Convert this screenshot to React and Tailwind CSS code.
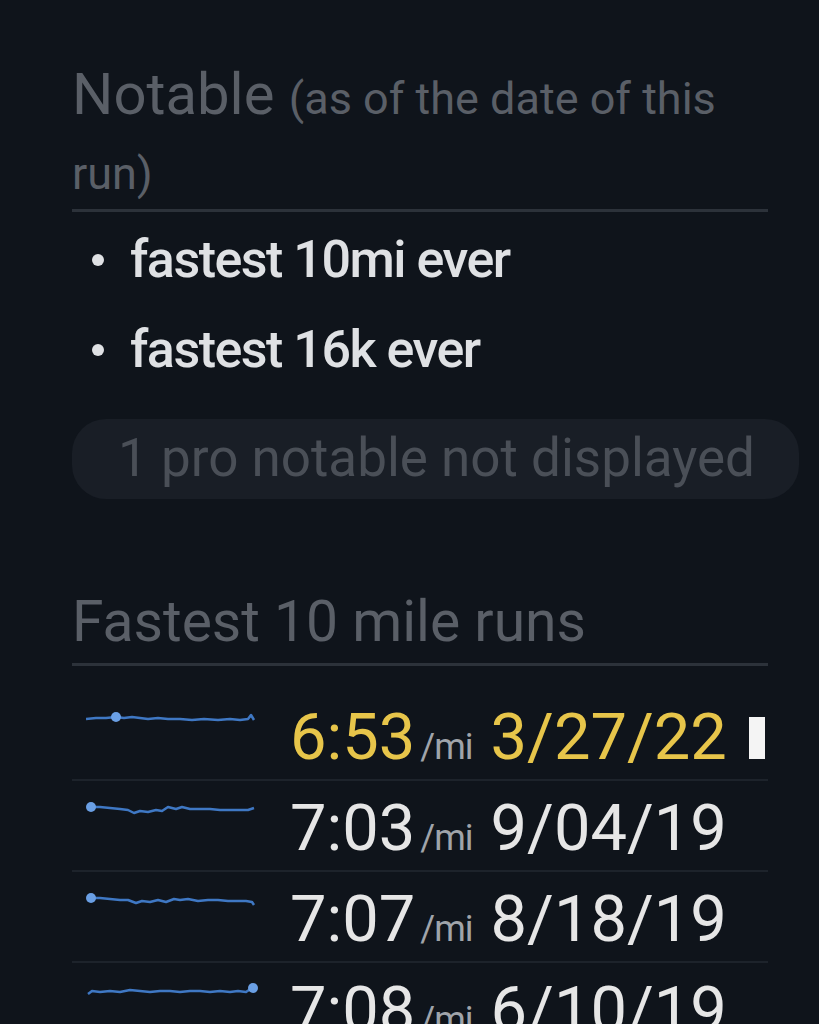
import React from 'react';

const runs = [
  { pace: '6:53', date: '3/27/22', best: true, dot: 'mid', path: 'M0 11 L10 10 L20 10 L30 9 L38 10 L46 9 L54 10 L62 11 L72 10 L82 11 L94 11 L106 12 L118 11 L132 12 L144 11 L154 12 L162 11 L165 7 L168 12' },
  { pace: '7:03', date: '9/04/19', dot: 'start', path: 'M4 8 L14 8 L24 9 L34 10 L42 11 L48 14 L54 12 L62 13 L70 11 L76 12 L82 8 L90 10 L96 8 L104 10 L114 10 L124 10 L134 11 L144 11 L154 11 L162 11 L168 9' },
  { pace: '7:07', date: '8/18/19', dot: 'start', path: 'M4 8 L14 8 L24 9 L34 10 L42 10 L50 13 L56 11 L64 12 L72 10 L80 12 L88 9 L94 10 L102 9 L112 11 L122 10 L132 10 L142 11 L152 11 L160 11 L166 12 L168 15' },
  { pace: '7:08', date: '6/10/19', dot: 'end', path: 'M2 13 L6 10 L14 11 L24 10 L34 11 L44 9 L54 10 L64 11 L74 10 L84 10 L94 11 L104 10 L114 10 L124 11 L134 10 L144 11 L152 10 L160 11 L166 7' },
];

function Spark({ path, dot }) {
  return (
    <svg width="172" height="22" viewBox="0 0 172 22" className="shrink-0">
      <path d={path} fill="none" stroke="#3f78c4" strokeWidth="2.5" strokeLinejoin="round" />
      {dot === 'start' && <circle cx="5" cy="8" r="5" fill="#6a9fe4" />}
      {dot === 'mid' && <circle cx="30" cy="9" r="5" fill="#6a9fe4" />}
      {dot === 'end' && <circle cx="167" cy="7" r="5" fill="#6a9fe4" />}
    </svg>
  );
}

export default function App() {
  return (
    <div className="min-h-screen w-full bg-[#0f141b] overflow-hidden" style={{ fontFamily: 'Roboto, "Noto Sans", sans-serif' }}>
      <div className="pl-[72px] pr-[51px] pt-[59px]">
        {/* notable */}
        <h2 className="text-[58px] leading-[70px] text-[#5a5f67] border-b-[3px] border-[#2c323a]">
          Notable <span className="text-[45px]">(as of the date of this run)</span>
        </h2>
        <ul className="mt-[3px]">
          {['fastest 10mi ever', 'fastest 16k ever'].map((t) => (
            <li key={t} className="flex items-center h-[90px] text-[52px] font-medium tracking-[-1.5px] text-[#dfe1e4]">
              <span className="w-[12px] h-[12px] rounded-full bg-[#dfe1e4] ml-[20px] mr-[26px] shrink-0" />
              {t}
            </li>
          ))}
        </ul>
        <div className="mt-[24px] w-fit h-[80px] flex items-center rounded-[34px] bg-[#191e26] pl-[46px] pr-[44px] text-[53px] text-[#4a4f57] whitespace-nowrap">
          1 pro notable not displayed
        </div>

        {/* fastest runs */}
        <h2 className="mt-[88px] text-[57px] leading-[70px] text-[#5a5f67] border-b-[3px] border-[#2c323a] pb-[6px]">
          Fastest 10 mile runs
        </h2>
        <div className="pt-[24px]">
          {runs.map((r, i) => (
            <div key={r.date} className={`flex items-start h-[91px] ${i < runs.length - 1 ? 'border-b-2 border-[#1d232b]' : ''}`}>
              <div className="w-[218px] pl-[14px] pt-[18px]">
                <Spark path={r.path} dot={r.dot} />
              </div>
              <div className={`flex items-baseline pt-[15px] leading-none ${r.best ? 'text-[#e7c54a]' : 'text-[#e6e6e6]'}`}>
                <span className="text-[65px]">{r.pace}</span>
                <span className="text-[36px] text-[#a0a4aa] ml-[5px] mr-[18px] tracking-[-1px]">/mi</span>
                <span className="text-[65px]">{r.date}</span>
                {r.best && <span className="ml-[22px] mb-[2px] w-[16px] h-[42px] bg-[#f4f4f4]" />}
              </div>
            </div>
          ))}
        </div>
      </div>
    </div>
  );
}
